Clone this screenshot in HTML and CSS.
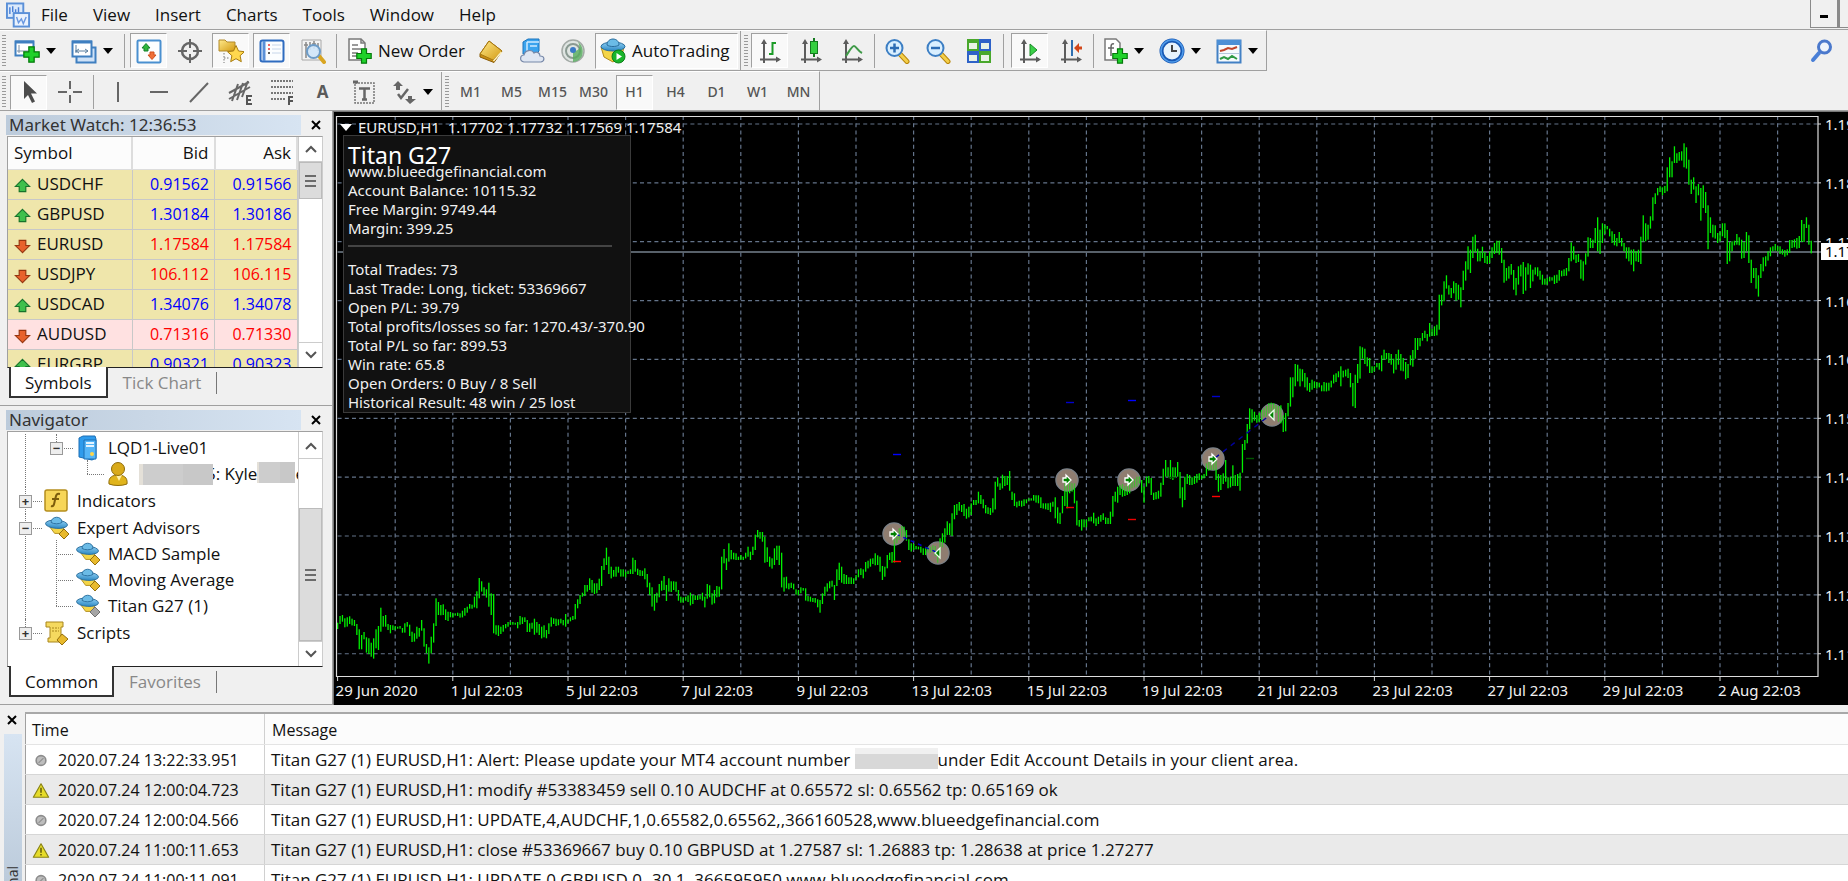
FILE: index.html
```html
<!DOCTYPE html>
<html lang="en">
<head>
<meta charset="utf-8">
<title>EURUSD,H1</title>
<link rel="stylesheet" href="styles.css">
</head>
<body>
<svg class="defs" aria-hidden="true">
  <defs>
    <linearGradient id="gGreen" x1="0" y1="0" x2="0" y2="1"><stop offset="0" stop-color="#7dff7d"/><stop offset="1" stop-color="#06a80c"/></linearGradient>
    <linearGradient id="gGold" x1="0" y1="0" x2="1" y2="1"><stop offset="0" stop-color="#ffe98a"/><stop offset="1" stop-color="#d39a12"/></linearGradient>
    <linearGradient id="gBlue" x1="0" y1="0" x2="0" y2="1"><stop offset="0" stop-color="#8fd0f5"/><stop offset="1" stop-color="#2b87c2"/></linearGradient>
    <symbol id="plus" viewBox="0 0 16 16"><path d="M5.500.8h5v4.700h4.700v5h-4.700v4.700h-5v-4.700H.8v-5h4.700z" fill="#1fd12a" stroke="#067a0c" stroke-width="1.200"/></symbol>
    <symbol id="up" viewBox="0 0 18 16"><path d="M9 1l7.500 7.500h-4V14h-7V8.500h-4z" fill="#3fc04c" stroke="#16732a" stroke-width="1.200"/></symbol>
    <symbol id="down" viewBox="0 0 18 16"><path d="M9 15L1.500 7.500h4V2h7v5.500h4z" fill="#e8622c" stroke="#96350f" stroke-width="1.200"/></symbol>
    <symbol id="ea" viewBox="0 0 26 24">
      <path d="M5 11l6 8h7l4-8z" fill="#f4d547" stroke="#b08b1c"/>
      <ellipse cx="13" cy="9" rx="12" ry="4.500" fill="url(#gBlue)" stroke="#2a6d9c" transform="rotate(4 13 9)"/>
      <path d="M7 7c0-7 12-8 12 0-3 2-9 2-12 0z" fill="#6bbbe6" stroke="#2a6d9c"/>
    </symbol>
    <symbol id="dot" viewBox="0 0 14 14"><circle cx="7" cy="7" r="4" fill="#bdbdbd" stroke="#8c8c8c" stroke-width="1.300"/><path d="M5 9l4-4" stroke="#909090"/></symbol>
    <symbol id="warn" viewBox="0 0 20 18"><path d="M10 1.500L18.500 16.500h-17z" fill="#e6dc2a" stroke="#8a8416" stroke-width="1.300" stroke-linejoin="round"/><path d="M10 6v5.500M10 13v1.500" stroke="#5b560c" stroke-width="1.600"/></symbol>
    <symbol id="axes" viewBox="0 0 26 26"><path d="M7 25V4M3 21.500h19" stroke="#5c5c5c" stroke-width="2" fill="none"/><path d="M7 1l3 5H4zM24 21.500l-5-3v6z" fill="#5c5c5c"/></symbol>
    <symbol id="lens" viewBox="0 0 26 26"><path d="M16 16l7 7.500" stroke="#b8860b" stroke-width="5" stroke-linecap="round"/><path d="M16 16l7 7.500" stroke="#f4cf4a" stroke-width="3" stroke-linecap="round"/><circle cx="10.500" cy="10" r="8" fill="#d9efff" stroke="#3d7fc4" stroke-width="2"/></symbol>
  </defs>
</svg>

<header class="top">
  <nav class="menubar">
    <svg class="applogo" viewBox="0 0 26 26"><rect x="1" y="1" width="17" height="15" fill="#dbe9fb" stroke="#5b90d8" stroke-width="2"/><path d="M4 5v7M7 4v6M10 7v6M13 5v7" fill="none" stroke="#4a80d8" stroke-width="1.500"/><rect x="8" y="11" width="16" height="14" fill="#eaf2fd" stroke="#5b90d8" stroke-width="2"/><path d="M11 15l2 6 3-4 2 5 3-7" fill="none" stroke="#6a98e0" stroke-width="1.500"/></svg>
    <button class="menu">File</button><button class="menu">View</button><button class="menu">Insert</button><button class="menu">Charts</button><button class="menu">Tools</button><button class="menu">Window</button><button class="menu">Help</button>
    <div class="winbtns"><button class="winbtn" aria-label="Minimize"><span class="minus"></span></button><button class="winbtn cut" aria-label="Restore"></button></div>
  </nav>
  <div class="toolrow">
    <div class="toolbar">
      <span class="grip"></span>
      <button class="drop" aria-label="New chart"><svg class="ico" viewBox="0 0 26 26"><rect x="1.500" y="3.500" width="18" height="14" fill="#fff" stroke="#3f7fc0" stroke-width="2"/><path d="M1 4h19" stroke="#3f7fc0" stroke-width="3"/><path d="M5 7v8M3 13h11" stroke="#7a8ea3"/><use href="#plus" x="9" y="8" width="17" height="17"/></svg><span class="caret"></span></button>
      <button class="drop" aria-label="Profiles"><svg class="ico" viewBox="0 0 26 26"><rect x="5.500" y="9.500" width="19" height="15" fill="#cfe2f7" stroke="#3f7fc0" stroke-width="2"/><rect x="1.500" y="3.500" width="19" height="15" fill="#fff" stroke="#3f7fc0" stroke-width="2"/><path d="M1 4h20" stroke="#3f7fc0" stroke-width="3"/><path d="M5 7v8M4 13h13M8 11l-3 2 3 2M14 11l3 2-3 2" stroke="#5b7f9f" fill="none"/></svg><span class="caret"></span></button>
      <span class="sep"></span>
      <button class="tb on" aria-label="Market Watch"><svg class="ico" viewBox="0 0 26 26"><rect x="1.500" y="2.500" width="23" height="22" rx="1" fill="#fdfefe" stroke="#4a90d0" stroke-width="2"/><path d="M10 5.500l4 4.500h-2v3H8v-3H6z" fill="#2fb63c" stroke="#14812a"/><path d="M16 21.500l-4-4.500h2v-3h4v3h2z" fill="#f07038" stroke="#d0501c"/></svg></button>
      <button class="tb" aria-label="Data Window"><svg class="ico" viewBox="0 0 26 26"><circle cx="13" cy="13" r="8" fill="none" stroke="#666" stroke-width="2.500"/><path d="M13 1v9M13 16v9M1 13h9M16 13h9" stroke="#666" stroke-width="2"/></svg></button>
      <button class="tb on" aria-label="Navigator"><svg class="ico" viewBox="0 0 26 26"><path d="M1 2h6l2 2h8v9H1z" fill="url(#gGold)" stroke="#b28a2a"/><path d="M6 15v10M6 20h6" stroke="#777" stroke-dasharray="1.500 1.500"/><path d="M18 7.500l2.500 5.500 6 .7-4.400 4 1.200 6-5.300-3-5.300 3 1.200-6-4.400-4 6-.7z" fill="#ffd84e" stroke="#a87c10"/></svg></button>
      <button class="tb on" aria-label="Terminal"><svg class="ico" viewBox="0 0 26 26"><rect x="1.500" y="2.500" width="23" height="21" rx="2" fill="#fbfdff" stroke="#2f6cc0" stroke-width="2"/><path d="M5 3v20" stroke="#5a90d8" stroke-width="3"/><path d="M9 7h2M9 11h2" stroke="#e33" stroke-width="1.500"/><path d="M9 15h2" stroke="#222" stroke-width="1.500"/><path d="M13 7h9M13 11h9M13 15h9" stroke="#c7d6ea"/></svg></button>
      <button class="tb" aria-label="Strategy Tester"><svg class="ico" viewBox="0 0 26 26"><path d="M2 2h19v20H2z" fill="#f3f3f3" stroke="#a8a8a8"/><path d="M6 4v16M10 4v8M14 3v8M18 5v8M4 7h4M12 6h4" stroke="#888" stroke-width="1.500"/><path d="M19 18l5 6" stroke="#d9a521" stroke-width="4" stroke-linecap="round"/><circle cx="13.500" cy="13.500" r="6.500" fill="#cfe6fa" fill-opacity=".9" stroke="#6d9cc8" stroke-width="2"/></svg></button>
      <span class="sep"></span>
      <button class="wide neworder"><svg class="ico" viewBox="0 0 26 26"><path d="M3 1h12l4 4v17H3z" fill="#fff" stroke="#7a7a7a" stroke-width="1.500"/><path d="M15 1v4h4M6 7h6M6 11h9M6 15h6M6 18h5" fill="none" stroke="#7a7a7a" stroke-width="1.500"/><use href="#plus" x="10" y="10" width="16" height="16"/></svg><span>New Order</span></button>
      <button class="tb" aria-label="MetaEditor"><svg class="ico" viewBox="0 0 26 26"><path d="M2 16L11 3l13 10-8 11.500L2 19z" fill="#c98e14" stroke="#8a5c08"/><path d="M2 16L11 3l13 10-9 9z" fill="url(#gGold)" stroke="#a8780f"/><path d="M15.500 23l8-9" stroke="#fff3c0" stroke-width="1.500"/></svg></button>
      <button class="tb" aria-label="Virtual hosting"><svg class="ico" viewBox="0 0 26 26"><path d="M4 4l5-3h11v12l-3 3H4z" fill="#3ba4ee" stroke="#1c74bd"/><path d="M8 4h12M8 4v11M11 8h7" stroke="#cfeaff" stroke-width="1.500"/><path d="M5 24c-5-1-4-7 0-7 1-5 8-6 10-2 3-2 6 0 6 3 5 0 5 5 1 6z" fill="#dfe6f2" stroke="#7788a8" stroke-width="1.200"/></svg></button>
      <button class="tb" aria-label="Signals"><svg class="ico" viewBox="0 0 26 26"><circle cx="13" cy="13" r="11" fill="#dfe5e2" stroke="#a3aaa6" stroke-width="1.500"/><circle cx="13" cy="13" r="7" fill="none" stroke="#8a9a92" stroke-width="2"/><path d="M13 13v11a11 11 0 0 0 9-6c2-6 0-11-4-14 3 6 1 9-5 9z" fill="#56ad5e" fill-opacity=".8"/><circle cx="13" cy="12" r="3" fill="#3a79c7"/></svg></button>
      <button class="wide on auto"><svg class="ico" viewBox="0 0 26 26"><path d="M1 9l3 10 9 5 9-7 2-8z" fill="#f4d547" stroke="#b08b1c"/><ellipse cx="13" cy="8.500" rx="12" ry="4.500" fill="url(#gBlue)" stroke="#2a6d9c"/><path d="M7 7c0-8 12-8 12 0-3 2-9 2-12 0z" fill="#6bbbe6" stroke="#2a6d9c"/><circle cx="18.500" cy="18.500" r="6.500" fill="#19b52a" stroke="#0c7d18"/><path d="M16.500 15l5.500 3.500-5.500 3.500z" fill="#fff"/></svg><span>AutoTrading</span></button>
      <span class="edge"></span><span class="grip"></span>
      <button class="tb on" aria-label="Bar chart"><svg class="ico" viewBox="0 0 26 26"><use href="#axes"/><path d="M15.500 17V4M15 5h4M12 16h4" stroke="#1c9c28" stroke-width="2"/></svg></button>
      <button class="tb" aria-label="Candlesticks"><svg class="ico" viewBox="0 0 26 26"><use href="#axes"/><path d="M16 0v19" stroke="#147a1e" stroke-width="2"/><rect x="12.500" y="3.500" width="7" height="12" fill="#35cf40" stroke="#147a1e"/></svg></button>
      <button class="tb" aria-label="Line chart"><svg class="ico" viewBox="0 0 26 26"><use href="#axes"/><path d="M7 18c4-6 6-10 8-10s4 5 8 7" fill="none" stroke="#3f9a48" stroke-width="2"/></svg></button>
      <span class="sep slim"></span>
      <button class="tb" aria-label="Zoom in"><svg class="ico" viewBox="0 0 26 26"><use href="#lens"/><path d="M6 10h9M10.500 5.500v9" stroke="#2c6cb4" stroke-width="2.500"/></svg></button>
      <button class="tb" aria-label="Zoom out"><svg class="ico" viewBox="0 0 26 26"><use href="#lens"/><path d="M6 10h9" stroke="#2c6cb4" stroke-width="2.500"/></svg></button>
      <button class="tb" aria-label="Tile windows"><svg class="ico" viewBox="0 0 26 26"><path d="M1 1h12v12H1zM13 13h12v12H13z" fill="#49a82c"/><path d="M13 1h12v12H13zM1 13h12v12H1z" fill="#2e62c8"/><path d="M3 5h8v6H3zM15 5h8v6h-8zM3 17h8v6H3zM15 17h8v6h-8z" fill="#e9f3e6"/></svg></button>
      <span class="sep roomy"></span>
      <button class="tb on" aria-label="Auto scroll"><svg class="ico" viewBox="0 0 26 26"><use href="#axes"/><path d="M13 6l7 6-7 6z" fill="#3ad048" stroke="#188a26"/></svg></button>
      <button class="tb" aria-label="Chart shift"><svg class="ico" viewBox="0 0 26 26"><use href="#axes"/><path d="M14 2v16" stroke="#2f6fb0" stroke-width="2"/><path d="M16 10l5-5v3.500h3v3h-3V15z" fill="#d2481c"/></svg></button>
      <span class="sep slim"></span>
      <button class="drop" aria-label="Indicators"><svg class="ico" viewBox="0 0 26 26"><path d="M3 1h11l4 4v17H3z" fill="#fff" stroke="#7a7a7a" stroke-width="1.500"/><path d="M12 6c-3-1-3 2-3 4v8M6 10h6" fill="none" stroke="#666" stroke-width="1.500"/><use href="#plus" x="10" y="10" width="16" height="16"/></svg><span class="caret"></span></button>
      <button class="drop" aria-label="Periods"><svg class="ico" viewBox="0 0 26 26"><circle cx="13" cy="13" r="10.500" fill="#e8f3fc" stroke="#1758b4" stroke-width="4"/><circle cx="13" cy="13" r="11" fill="none" stroke="#4f9bea" stroke-width="1.500"/><path d="M13 7v6h5" fill="none" stroke="#444" stroke-width="2"/></svg><span class="caret"></span></button>
      <button class="drop" aria-label="Templates"><svg class="ico" viewBox="0 0 26 26"><rect x="1.500" y="2.500" width="23" height="22" fill="#f6fafd" stroke="#4280c4" stroke-width="2"/><path d="M1 4.500h24" stroke="#4c8fd6" stroke-width="5"/><path d="M4 13l4-1 4-2 4 1 5-2" fill="none" stroke="#c0442a" stroke-width="2"/><path d="M3 15.500h20" stroke="#b5c9dd"/><path d="M4 21l4-2 4 2 4-3 5 3" fill="none" stroke="#2f9a44" stroke-width="2"/></svg><span class="caret"></span></button>
    </div>
    <button class="search" aria-label="Search"><svg class="ico" viewBox="0 0 26 26"><path d="M10 15l-6 7" stroke="#4a7fd6" stroke-width="4" stroke-linecap="round"/><circle cx="15.500" cy="9" r="6" fill="#eef3fb" stroke="#4a78cc" stroke-width="3"/></svg></button>
  </div>
  <div class="toolrow second">
    <div class="toolbar">
      <span class="grip"></span><span class="pad"></span>
      <button class="tb on" aria-label="Cursor"><svg class="ico" viewBox="0 0 26 26"><path d="M8 2v18l4-4 4 8 3-1.500-4-8h6z" fill="#4c4c4c"/></svg></button>
      <button class="tb" aria-label="Crosshair"><svg class="ico" viewBox="0 0 26 26"><path d="M13 2v8M13 16v8M1 13h9M16 13h9" stroke="#666" stroke-width="2"/></svg></button>
      <span class="sep"></span>
      <button class="tb" aria-label="Vertical line"><svg class="ico" viewBox="0 0 26 26"><path d="M13 3v20" stroke="#666" stroke-width="2"/></svg></button>
      <button class="tb" aria-label="Horizontal line"><svg class="ico" viewBox="0 0 26 26"><path d="M4 13h18" stroke="#666" stroke-width="2"/></svg></button>
      <button class="tb" aria-label="Trendline"><svg class="ico" viewBox="0 0 26 26"><path d="M3 23L21 4" stroke="#666" stroke-width="2"/></svg></button>
      <button class="tb" aria-label="Equidistant channel"><svg class="ico" viewBox="0 0 26 26"><path d="M1 14L21 3M1 20L22 8M4 22L10 5M9 21L15 4M14 18l6-16" stroke="#666" stroke-width="2"/><path d="M24 17h-5v8h5M19 21h4" fill="none" stroke="#555" stroke-width="2"/></svg></button>
      <button class="tb" aria-label="Fibonacci retracement"><svg class="ico" viewBox="0 0 26 26"><path d="M2 2h22M2 8h22M2 14h22M2 20h14" stroke="#777" stroke-width="2" stroke-dasharray="2 1"/><path d="M24 18h-4v8M20 22h4" fill="none" stroke="#555" stroke-width="2"/></svg></button>
      <button class="tb letter">A</button>
      <button class="tb" aria-label="Text label"><svg class="ico" viewBox="0 0 26 26"><rect x="4" y="4" width="19" height="20" fill="none" stroke="#777" stroke-width="1.500" stroke-dasharray="2 1"/><path d="M2 3h5" stroke="#666" stroke-width="3"/><path d="M8 9.500h11M13.500 9v12M11 20.500h5" stroke="#666" stroke-width="2.500"/></svg></button>
      <button class="drop" aria-label="Arrows"><svg class="ico" viewBox="0 0 26 26"><path d="M7 2l5 5h-3v4H5V7H2zM19 25l-5-5h3v-3h4v3h4z" fill="#666"/><path d="M7 15l3 4 7-9" fill="none" stroke="#666" stroke-width="2.500"/></svg><span class="caret"></span></button>
      <span class="edge"></span><span class="grip"></span>
      <button class="tb period">M1</button><button class="tb period">M5</button><button class="tb period">M15</button><button class="tb period">M30</button><button class="tb period on">H1</button><button class="tb period">H4</button><button class="tb period">D1</button><button class="tb period">W1</button><button class="tb period">MN</button>
    </div>
  </div>
</header>

<main class="work">
  <aside class="side">
    <section class="panel">
      <div class="titlebar"><h2>Market Watch: 12:36:53</h2><button class="close" aria-label="Close"><svg viewBox="0 0 12 12"><path d="M2 2l8 8M10 2l-8 8"/></svg></button></div>
      <div class="view market">
        <div class="clip">
          <table class="quotes">
            <thead><tr><th class="sym">Symbol</th><th>Bid</th><th>Ask</th></tr></thead>
            <tbody>
              <tr class="rise"><td class="sym"><span><svg><use href="#up"/></svg>USDCHF</span></td><td>0.91562</td><td>0.91566</td></tr>
              <tr class="rise"><td class="sym"><span><svg><use href="#up"/></svg>GBPUSD</span></td><td>1.30184</td><td>1.30186</td></tr>
              <tr class="fall"><td class="sym"><span><svg><use href="#down"/></svg>EURUSD</span></td><td>1.17584</td><td>1.17584</td></tr>
              <tr class="fall"><td class="sym"><span><svg><use href="#down"/></svg>USDJPY</span></td><td>106.112</td><td>106.115</td></tr>
              <tr class="rise"><td class="sym"><span><svg><use href="#up"/></svg>USDCAD</span></td><td>1.34076</td><td>1.34078</td></tr>
              <tr class="fall pink"><td class="sym"><span><svg><use href="#down"/></svg>AUDUSD</span></td><td>0.71316</td><td>0.71330</td></tr>
              <tr class="rise"><td class="sym"><span><svg><use href="#up"/></svg>EURGBP</span></td><td>0.90321</td><td>0.90323</td></tr>
            </tbody>
          </table>
        </div>
        <div class="scroll"><button class="sbtn" aria-label="Scroll up"><svg viewBox="0 0 14 10"><path d="M2 8l5-5 5 5"/></svg></button><div class="thumb short"><i></i><i></i><i></i></div><div class="track"></div><button class="sbtn" aria-label="Scroll down"><svg viewBox="0 0 14 10"><path d="M2 2l5 5 5-5"/></svg></button></div>
      </div>
      <div class="tabs"><button class="tab active">Symbols</button><button class="tab">Tick Chart</button></div>
    </section>

    <section class="panel">
      <div class="titlebar"><h2>Navigator</h2><button class="close" aria-label="Close"><svg viewBox="0 0 12 12"><path d="M2 2l8 8M10 2l-8 8"/></svg></button></div>
      <div class="view nav">
        <div class="clip">
          <ul class="tree">
            <li><span class="cell v"></span><span class="cell h up"><b class="box">−</b></span><svg class="ti" viewBox="0 0 24 24"><path d="M4 2l4-2h12l1 3v19l-4 2-13-3z" fill="#2f9bec" stroke="#1c6fb5"/><path d="M9 4h12v19H9z" fill="#55b5f7" stroke="#1c6fb5"/><path d="M11 7h8M11 10h8" stroke="#e5f4ff" stroke-width="2"/><circle cx="17" cy="18" r="2" fill="#ffd54a"/></svg>LQD1-Live01</li>
            <li><span class="cell v"></span><span class="cell"></span><span class="cell h up"></span><svg class="ti" viewBox="0 0 24 24"><path d="M3 22c-1-7 4-9 9-9s10 2 9 9c-5 2-13 2-18 0z" fill="#e0b41c" stroke="#8f6c0a"/><path d="M10 13l3 6 3-6z" fill="#fff0a8"/><circle cx="12" cy="7" r="6.500" fill="#d9aa1a" stroke="#8f6c0a"/></svg><span class="mosaic long"></span><span>5: Kyle</span><span class="mosaic mid"></span><span>e</span></li>
            <li class="lead"><span class="cell v h"><b class="box">+</b></span><svg class="ti" viewBox="0 0 24 24"><rect x="1" y="1" width="22" height="21" rx="2" fill="#f7d659" stroke="#b58e1e" stroke-width="1.500"/><path d="M16 5c-4-1-4 2-5 6s-1 7-4 6M8 10h7" fill="none" stroke="#7d5d0c" stroke-width="2"/></svg>Indicators</li>
            <li class="lead"><span class="cell v h"><b class="box">−</b></span><svg class="ti ea" viewBox="0 0 26 24"><use href="#ea" width="25" height="22"/><path d="M20 13l5 5-5 5-5-5z" fill="#e8b92c" stroke="#95700f"/></svg>Expert Advisors</li>
            <li><span class="cell v"></span><span class="cell v h"></span><svg class="ti ea" viewBox="0 0 26 24"><use href="#ea" width="25" height="22"/><path d="M20 13l5 5-5 5-5-5z" fill="#e8b92c" stroke="#95700f"/></svg>MACD Sample</li>
            <li><span class="cell v"></span><span class="cell v h"></span><svg class="ti ea" viewBox="0 0 26 24"><use href="#ea" width="25" height="22"/><path d="M20 13l5 5-5 5-5-5z" fill="#e8b92c" stroke="#95700f"/></svg>Moving Average</li>
            <li><span class="cell v"></span><span class="cell h up"></span><svg class="ti ea" viewBox="0 0 26 24"><use href="#ea" width="25" height="22"/><path d="M20 13l5 5-5 5-5-5z" fill="#a5a5a5" stroke="#707070"/></svg>Titan G27 (1)</li>
            <li class="lead"><span class="cell h up"><b class="box">+</b></span><svg class="ti" viewBox="0 0 24 24"><path d="M2 1h17v5h-2v12h3v3H4v-4h2V6H2z" fill="#f5d95f" stroke="#a8851d"/><path d="M8 7h7M8 10h7" stroke="#a8851d" stroke-dasharray="2 1"/><path d="M18 13l6 5-6 6-5-5z" fill="#e8b92c" stroke="#95700f"/></svg>Scripts</li>
          </ul>
        </div>
        <div class="scroll lower"><button class="sbtn" aria-label="Scroll up"><svg viewBox="0 0 14 10"><path d="M2 8l5-5 5 5"/></svg></button><div class="track"></div><div class="thumb tall"><i></i><i></i><i></i></div><button class="sbtn" aria-label="Scroll down"><svg viewBox="0 0 14 10"><path d="M2 2l5 5 5-5"/></svg></button></div>
      </div>
      <div class="tabs"><button class="tab active">Common</button><button class="tab">Favorites</button></div>
    </section>
  </aside>

  <section class="chart">
    <svg id="plot" class="plot" role="img" aria-label="EURUSD hourly bar chart"></svg>
    <div class="ohlc"><span class="tri"></span>EURUSD,H1  1.17702 1.17732 1.17569 1.17584</div>
    <div class="info">
      <h1>Titan G27</h1>
      <p>www.blueedgefinancial.com</p>
      <p>Account Balance: 10115.32</p>
      <p>Free Margin: 9749.44</p>
      <p>Margin: 399.25</p>
      <hr>
      <p>Total Trades: 73</p>
      <p>Last Trade: Long, ticket: 53369667</p>
      <p>Open P/L: 39.79</p>
      <p>Total profits/losses so far: 1270.43/-370.90</p>
      <p>Total P/L so far: 899.53</p>
      <p>Win rate: 65.8</p>
      <p>Open Orders: 0 Buy / 8 Sell</p>
      <p>Historical Result: 48 win / 25 lost</p>
    </div>
  </section>
</main>

<section class="terminal">
  <div class="strip"><button class="close" aria-label="Close"><svg viewBox="0 0 12 12"><path d="M2 2l8 8M10 2l-8 8"/></svg></button><div class="vbar"><span>Terminal</span></div></div>
  <table class="log">
    <thead><tr><th class="time">Time</th><th>Message</th></tr></thead>
    <tbody>
      <tr><td class="time"><span><svg><use href="#dot"/></svg>2020.07.24 13:22:33.951</span></td><td>Titan G27 (1) EURUSD,H1: Alert: Please update your MT4 account number <span class="mosaic wide-m"></span>under Edit Account Details in your client area.</td></tr>
      <tr><td class="time"><span><svg><use href="#warn"/></svg>2020.07.24 12:00:04.723</span></td><td>Titan G27 (1) EURUSD,H1: modify #53383459 sell 0.10 AUDCHF at 0.65572 sl: 0.65562 tp: 0.65169 ok</td></tr>
      <tr><td class="time"><span><svg><use href="#dot"/></svg>2020.07.24 12:00:04.566</span></td><td>Titan G27 (1) EURUSD,H1: UPDATE,4,AUDCHF,1,0.65582,0.65562,,366160528,www.blueedgefinancial.com</td></tr>
      <tr><td class="time"><span><svg><use href="#warn"/></svg>2020.07.24 11:00:11.653</span></td><td>Titan G27 (1) EURUSD,H1: close #53369667 buy 0.10 GBPUSD at 1.27587 sl: 1.26883 tp: 1.28638 at price 1.27277</td></tr>
      <tr><td class="time"><span><svg><use href="#dot"/></svg>2020.07.24 11:00:11.091</span></td><td>Titan G27 (1) EURUSD,H1: UPDATE,0,GBPUSD,0,-30.1,,366595950,www.blueedgefinancial.com</td></tr>
    </tbody>
  </table>
</section>
<script src="chart.js"></script>
</body>
</html>
```

FILE: styles.css
```css
* { box-sizing: border-box; }
body { margin: 0; height: 100vh; overflow: hidden; display: flex; flex-direction: column; background: #f0f0f0; color: #111; font: 17px/22px "Open Sans", "Noto Sans", sans-serif; }
button { font: inherit; color: inherit; background: none; border: 0; padding: 0; margin: 0; }
.defs { position: absolute; width: 0; height: 0; }
.top { flex: none; }

.menubar { display: flex; align-items: center; height: 30px; padding-left: 6px; border-bottom: 1px solid #a0a0a0; }
.applogo { width: 25px; height: 26px; margin-right: 10px; }
.menu { margin-right: 25px; }
.winbtns { margin-left: auto; display: flex; align-self: stretch; }
.winbtn { width: 29px; height: 28px; border: 1px solid #8a8a8a; border-top: 0; border-right-width: 2px; display: flex; align-items: center; justify-content: center; }
.winbtn.cut { width: 9px; border-right: 0; }
.minus { width: 8px; height: 3px; margin-top: 6px; background: #000; }

.toolrow { display: flex; justify-content: space-between; height: 41px; }
.toolbar { display: flex; align-items: center; padding-left: 2px; border-top: 1px solid #fff; border-right: 1px solid #a0a0a0; border-bottom: 1px solid #a0a0a0; }
.second { height: 40px; border-bottom: 1px solid #a0a0a0; }
.second .toolbar { border-bottom: 0; padding-top: 2px; }
.grip { width: 5px; height: 32px; flex: none; background: repeating-linear-gradient(#9a9a9a 0 1px, #f0f0f0 1px 3px); border-right: 1px solid #f0f0f0; }
.pad { width: 1px; }
.ico { width: 26px; height: 26px; flex: none; display: block; }
.tb { width: 37px; height: 35px; margin: 0 2px; flex: none; display: flex; align-items: center; justify-content: center; }
.on { background: #f9f9f9; border: 1px solid #fff; border-top-color: #a0a0a0; border-left-color: #a0a0a0; }
.drop { display: flex; align-items: center; width: 57px; padding-left: 7px; flex: none; }
.caret { margin-left: 6px; border: 5px solid transparent; border-top: 6px solid #000; border-bottom: 0; }
.sep { width: 1px; height: 34px; margin: 0 3px; background: #a0a0a0; }
.sep.slim { margin: 0 1px 0 2px; }
.sep.roomy { margin: 0 5px 0 4px; }
.edge { width: 1px; height: 40px; margin: 0 3px 0 0; background: #a0a0a0; }
.wide { display: flex; align-items: center; gap: 6px; height: 36px; flex: none; white-space: nowrap; }
.neworder { width: 130px; padding-left: 6px; }
.auto { width: 143px; margin: 0 2px; padding-left: 4px; }
.letter { font-weight: 700; color: #5a5a5a; }
.period { font: 14px/18px "Noto Sans", "Open Sans", sans-serif; font-weight: 500; color: #555; }
.search { width: 52px; display: flex; align-items: center; justify-content: center; }

.work { display: flex; flex: none; }
.side { width: 333px; flex: none; border-right: 1px solid #a0a0a0; }
.panel { padding: 4px 9px 7px 6px; border-bottom: 1px solid #a0a0a0; }
.titlebar { display: flex; height: 20px; margin-bottom: 1px; }
.titlebar h2 { flex: 1; margin: 0; padding-left: 3px; font: 17px/20px "Noto Sans", "Open Sans", sans-serif; color: #333; background: linear-gradient(90deg, #bccbdb, #d7e4f2); }
.close { width: 22px; display: flex; align-items: center; justify-content: flex-end; }
.close svg { width: 12px; height: 12px; margin-right: 1px; }
.close path { stroke: #000; stroke-width: 2; }
.view { display: flex; margin-left: 1px; background: #fff; border: 1px solid #a0a0a0; border-bottom: 1px solid #222; border-right-color: #ccc; }
.clip { flex: 1; overflow: hidden; min-width: 0; }
.market { height: 232px; }
.nav { height: 236px; }
.quotes { width: 100%; border-collapse: collapse; table-layout: fixed; }
.quotes th { height: 32px; font-weight: 400; text-align: right; background: #fcfcfc; border-right: 2px solid #ddd; border-bottom: 1px solid #ddd; padding: 0 5px 0 0; }
.quotes .sym { width: 124px; text-align: left; padding-left: 6px; }
.quotes td { height: 30px; padding: 0 5px 0 0; font-size: 16px; text-align: right; background: #efe6ab; border-right: 1px solid #c8c8c8; border-bottom: 1px solid #c8c8c8; }
.quotes .sym span { display: flex; align-items: center; gap: 6px; font-size: 17px; }
.quotes .sym svg { width: 17px; height: 16px; margin-top: 3px; }
.quotes .rise td { color: #00f; }
.quotes .fall td { color: #f00; }
.quotes tr .sym { color: #111; }
.quotes .pink td { background: #ffe1e1; }
.scroll { width: 24px; flex: none; display: flex; flex-direction: column; border-left: 1px solid #ccc; background: #fff; }
.scroll.lower { padding-top: 2px; }
.sbtn { height: 25px; flex: none; display: flex; align-items: center; justify-content: center; border-bottom: 1px solid #ccc; }
.sbtn:last-child { border-top: 1px solid #ccc; border-bottom: 0; }
.sbtn svg { width: 14px; height: 10px; fill: none; stroke: #555; stroke-width: 2; }
.track { flex: 1; }
.thumb { flex: none; background: #dcdcdc; border: 1px solid #bbb; display: flex; flex-direction: column; align-items: center; justify-content: center; gap: 3px; }
.thumb i { width: 11px; height: 2px; background: #6b6b6b; }
.thumb.short { height: 37px; }
.thumb.tall { height: 133px; }
.tabs { display: flex; padding-left: 3px; }
.tab { height: 30px; padding: 0 15px; color: #888; position: relative; }
.tab.active { background: #fff; color: #111; border: 2px solid #333; border-top: 0; margin-top: -1px; height: 31px; padding: 2px 14px 0; z-index: 1; }
.tab:not(.active) { border-right: 1px solid #777; height: 22px; margin-top: 4px; line-height: 20px; }

.tree { list-style: none; margin: 0; padding: 3px 0 0 2px; }
.tree li { display: flex; align-items: center; height: 26px; white-space: nowrap; }
.tree .lead { margin-top: 1px; }
.cell { position: relative; width: 31px; align-self: stretch; flex: none; display: flex; align-items: center; padding-left: 9px; }
.cell.v::before { content: ""; position: absolute; left: 15px; top: -1px; bottom: 0; border-left: 1px dotted #777; }
.cell.h::after { content: ""; position: absolute; left: 15px; right: -1px; top: 13px; border-top: 1px dotted #777; }
.cell.up::before { content: ""; position: absolute; left: 15px; top: -1px; height: 14px; border-left: 1px dotted #777; }
.box { position: relative; z-index: 1; width: 13px; height: 13px; border: 1px solid #999; background: #eee; font: 700 13px/11px "Noto Sans", sans-serif; text-align: center; color: #333; }
.ti { width: 24px; height: 24px; margin: 0 9px 0 3px; flex: none; overflow: visible; }
.ti.ea { width: 26px; margin-right: 7px; }
.mosaic { display: inline-block; height: 21px; background: linear-gradient(90deg, #e4e0d8 0 6%, #cdcdcd 6% 60%, #c8c8c8 60%); vertical-align: middle; position: relative; }
.mosaic.long { width: 74px; margin-right: -7px; flex: none; }
.mosaic.mid { width: 38px; flex: none; margin-bottom: 4px; }
.mosaic.wide-m { width: 83px; height: 21px; margin: -6px 0 0; background: linear-gradient(#f0f0f0 0 30%, #d8d8d8 30%); }

.chart { flex: 1; min-width: 0; position: relative; overflow: hidden; background: #000; border-top: 1px solid #777; border-left: 1px solid #777; color: #f0f0f0; font: 15px/19px "Noto Sans", "Open Sans", sans-serif; }
.plot { position: absolute; left: 0; top: 0; width: 100%; height: 100%; }
.plot text { fill: #f0f0f0; font-size: 15px; }
.ohlc { position: relative; display: flex; align-items: center; gap: 6px; margin: 6px 0 0 6px; white-space: pre; height: 19px; }
.tri { border: 6px solid transparent; border-top: 7px solid #fff; border-bottom: 0; }
.info { position: relative; width: 288px; margin: -2px 0 0 9px; padding: 11px 5px 0 4px; height: 278px; background: #111; border: 1px solid #3a3a3a; white-space: nowrap; }
.info h1 { margin: 0 0 -1px; font-size: 23px; line-height: 16px; font-weight: 400; color: #fff; }
.info p { margin: 0; }
.info hr { width: 264px; height: 2px; margin: 7px 0 13px; border: 0; background: #444; }

.terminal { flex: 1; min-height: 0; overflow: hidden; display: flex; margin-top: 7px; }
.strip { width: 25px; flex: none; display: flex; flex-direction: column; padding-left: 4px; }
.strip .close { width: 17px; height: 16px; flex: none; justify-content: center; }
.vbar { flex: 1; margin-top: 6px; width: 18px; background: linear-gradient(#d7e4f2, #bccbdb); overflow: hidden; padding-top: 132px; }
.vbar span { writing-mode: vertical-rl; transform: rotate(180deg); display: block; font-size: 14px; line-height: 18px; color: #333; }
.log { flex: 1; align-self: flex-start; border-collapse: collapse; table-layout: fixed; background: #fff; border-top: 2px solid #a8a8a8; border-left: 1px solid #a0a0a0; white-space: nowrap; }
.log th { height: 31px; text-align: left; font-weight: 400; font-size: 16px; background: #fcfcfc; border-bottom: 1px solid #e4e4e4; padding: 3px 0 0 7px; }
.log td { height: 30px; padding: 2px 0 0 6px; border-bottom: 1px solid #d6d6d6; line-height: 20px; }
.log tr:nth-child(even) td { background: #eaeaea; }
.log .time { width: 239px; padding-left: 6px; border-right: 1px solid #d0d0d0; font-size: 16px; }
.log .time span { display: flex; align-items: center; gap: 8px; }
.log .time svg { width: 18px; height: 17px; }
```

FILE: chart.js
```js
// Each entry of `days` covers one grid column; values are high/low pairs in thirds of a pixel below `top`.
const CELL = 57.6, LEFT = 3.6, RIGHT = 1484, BOTTOM = 564, GRID_TOP = 12, GRID_STEP = 58.86;
const sections = [
  { top: 388, days: [
    "368 387 348 372 345 365 355 382 352 380 349 372 356 376 360 378 372 405 388 448 405 448 396 418 412 458 415 462 428 470 415 476 388 445 378 450 323 395 348 380 345 380 372 390 375 400 376 390",
    "378 390 380 386 378 386 384 398 370 398 366 380 374 408 395 426 400 425 380 416 384 410 360 392 385 440 432 460 442 491 410 460 370 428 295 378 306 345 315 346 313 345 328 360 335 363 336 352",
    "340 353 340 347 338 348 340 353 332 352 324 347 320 338 312 326 314 326 290 322 274 325 234 295 244 275 262 286 268 293 248 320 280 345 282 400 376 404 376 408 380 402 375 395 372 385 366 380",
    "366 375 366 374 368 374 366 385 348 374 352 372 352 366 360 396 370 396 368 386 356 404 366 398 372 405 380 415 376 412 390 415 370 402 352 380 355 372 356 378 358 376 356 370 360 376 342 380",
    "358 370 352 364 348 360 312 358 298 325 285 312 278 290 255 288 255 275 235 270 240 278 250 282 250 280 236 270 198 258 175 210 143 195 170 222 200 235 210 230 200 230 200 218 208 230 208 230",
    "215 232 212 222 208 222 173 222 180 215 206 225 210 228 212 228 205 238 222 262 248 285 262 320 282 332 278 308 252 292 242 272 228 270 255 303 235 275 244 276 244 270 245 275 270 302 290 308",
    "292 308 290 302 286 306 278 316 285 312 286 300 286 300 286 298 278 302 290 322 252 296 256 292 280 314 270 310 258 292 260 290 170 268 147 190 175 210 130 185 150 178 158 178 160 180 170 180",
    "165 180 170 180 158 175 140 170 155 180 140 165 104 150 90 112 96 116 96 125 110 188 142 186 170 200 175 206 145 195 137 180 137 195 158 262 232 275 230 265 250 268 248 264 251 268 268 284",
    "270 286 262 280 264 272 265 302 288 304 290 305 294 306 294 308 298 322 300 338 280 312 260 288 250 275 244 265 242 260 255 300 208 258 188 240 200 248 222 252 225 252 232 252 232 252 235 252" ] },
  { top: 268, days: [
    "585 600 568 592 565 585 568 595 546 575 542 565 536 560 535 552 520 556 526 555 530 575 558 600 560 590 525 565 518 540 516 548 475 548 455 490 445 480 438 470 440 470 450 482 478 510 490 515",
    "492 510 498 508 500 508 500 518 505 525 505 525 502 518 500 518 496 516 498 528 512 548 475 518 460 502 445 488 424 465 430 465 400 468 375 418 372 405 366 392 375 396 372 408 386 416 380 412",
    "370 405 360 375 360 375 335 370 345 372 358 385 375 400 382 402 384 405 355 398 305 388 292 320 310 330 284 325 288 318 288 315 273 332 335 360 340 378 365 382 362 378 362 380 358 378 358 370",
    "355 362 355 362 345 362 346 368 346 370 352 384 370 386 370 388 370 390 368 396 365 380 352 415 382 430 398 432 348 400 310 378 312 385 300 340 310 335 310 370 362 436 420 440 418 452 418 442",
    "420 442 412 424 410 424 398 430 415 438 410 432 405 425 400 420 412 432 414 432 395 432 348 410 335 365 320 368 315 345 312 350 318 348 312 345 305 340 300 325 296 322 290 320 290 310 300 338",
    "320 368 290 320 288 310 294 345 338 360 336 358 332 356 308 350 266 315 240 290 262 290 240 296 262 300 262 292 246 290 276 355 322 382 290 360 282 312 285 315 292 315 288 312 282 308 280 300",
    "286 298 282 295 250 288 245 272 240 270 240 270 240 300 282 335 285 330 280 312 240 305 292 325 290 322 256 318 285 318 282 318 278 332 192 278 180 210 132 190 85 148 88 128 95 122 105 128" ] },
  { top: -4, days: [
    "914 941 906 936 901 926 894 926 886 916 884 916 886 911 891 914 894 941 892 946 922 972 915 970 885 925 808 896 808 868 768 835 770 820 782 835 784 820 795 838 808 848 825 852 815 845 820 840",
    "822 842 824 838 832 850 822 850 824 850 824 848 818 838 800 826 796 822 790 808 775 835 788 808 785 805 782 810 795 838 825 895 800 900 768 825 715 812 718 752 722 768 748 775 750 795 775 795",
    "775 790 765 778 765 785 742 790 725 756 735 754 735 765 738 770 752 796 738 785 725 770 738 788 750 790 762 814 768 810 742 772 726 776 690 752 690 726 690 715 675 698 668 690 678 700 645 686",
    "662 684 655 684 650 682 560 665 560 592 520 580 502 542 532 560 540 570 520 556 525 578 530 575 538 598 488 546 460 518 415 485 425 495 386 450 380 432 422 460 430 460 416 450 432 465 444 468",
    "430 465 418 450 405 438 398 435 398 440 420 465 455 524 480 518 475 512 468 500 486 545 510 562 475 530 470 505 462 558 478 548 466 500 470 540 485 520 478 500 478 505 488 515 500 530 512 530",
    "510 530 506 520 508 518 502 528 500 525 486 518 488 505 484 504 480 503 450 490 403 460 415 455 440 465 438 462 455 512 460 518 436 470 388 446 390 420 395 420 360 405 328 430 365 438 346 405",
    "350 378 354 364 362 385 370 405 378 412 390 415 372 405 390 415 405 430 418 452 418 460 425 470 424 490 430 460 425 462 386 468 322 400 346 400 350 395 325 362 268 338 256 288 240 262 235 252",
    "238 262 234 255 178 250 148 208 160 208 115 165 136 165 132 158 130 158 106 178 118 182 155 230 215 258 208 245 235 285 228 262 240 338 232 300 252 315 292 424 328 375 350 388 352 392 375 405",
    "370 400 346 385 346 390 366 468 402 460 400 430 398 412 378 410 388 412 395 452 402 450 372 430 382 465 455 525 480 510 480 542 502 566 468 510 448 490 445 475 430 458 418 445 415 430 408 428",
    "415 430 415 438 424 440 426 446 424 442 396 435 396 420 394 418 390 422 384 420 336 402 348 402 328 360 350 410 398 436" ] }
];
const marks = { open: [[560, 422], [733, 368], [795, 368], [879, 347]], close: [[604, 441], [938, 303]] };
const levels = [
  [559, 343, "#00f"], [732, 291, "#00c"], [794, 289, "#00f"], [878, 285, "#00c"],
  [559, 450, "#f00"], [732, 396, "#e00"], [794, 408, "#e00"], [878, 385, "#f00"],
  [912, 347, "#050"], [834, 366, "#050"]
];
const dates = ["29 Jun 2020", "1 Jul 22:03", "5 Jul 22:03", "7 Jul 22:03", "9 Jul 22:03", "13 Jul 22:03", "15 Jul 22:03", "19 Jul 22:03", "21 Jul 22:03", "23 Jul 22:03", "27 Jul 22:03", "29 Jul 22:03", "2 Aug 22:03"];
const prices = ["1.19200", "1.18445", "1.17690", "1.16935", "1.16180", "1.15425", "1.14670", "1.13915", "1.12960", "1.11905"];

let out = "";
const line = (x1, y1, x2, y2, attrs) => { out += `<line x1="${x1}" y1="${y1}" x2="${x2}" y2="${y2}" ${attrs}/>`; };
const text = (x, y, s, attrs = "") => { out += `<text x="${x}" y="${y}" ${attrs}>${s}</text>`; };
const circles = (attrs) => {
  for (const [x, y] of marks.open.concat(marks.close)) out += `<circle cx="${x}" cy="${y}" r="11" ${attrs}/>`;
};

const dash = 'stroke="#64748a" stroke-width="1.2" stroke-dasharray="4 3.2"';
for (let k = 1; k <= 25; k++) line(LEFT + k * CELL, 4, LEFT + k * CELL, BOTTOM, dash);
for (let k = 0; k < 10; k++) {
  const y = GRID_TOP + k * GRID_STEP;
  line(LEFT, y, RIGHT, y, dash);
  line(RIGHT, y, RIGHT + 3, y, 'stroke="#ddd"');
  text(RIGHT + 7, y + 6, prices[k]);
}
line(LEFT, 140, RIGHT + 3, 140, 'stroke="#76828e" stroke-width="1.4"');

circles('fill="#8f7d70" stroke="#78828c" stroke-width="1.5"');

let col = 0;
for (const { top, days } of sections) {
  for (const day of days) {
    const v = day.split(" ").map(Number), n = v.length / 2, step = n < 20 ? 2.4 : CELL / n;
    for (let i = 0; i < n; i++) {
      const x = LEFT + col * CELL + i * step - 0.6;
      out += `<rect x="${x.toFixed(2)}" y="${(top + v[2 * i] / 3).toFixed(1)}" width="1.3" height="${((v[2 * i + 1] - v[2 * i]) / 3).toFixed(1)}" fill="#00f000"/>`;
    }
    col++;
  }
}
circles('fill="#8f7d70" fill-opacity="0.5"');

line(562, 422, 602, 440, 'stroke="#0000c8" stroke-width="1.4" stroke-dasharray="4 4"');
line(881, 346, 936, 303, 'stroke="#0000a0" stroke-width="1.4" stroke-dasharray="5 5"');
for (const [x, y, c] of levels) line(x, y - 0.5, x + 8, y - 0.5, `stroke="${c}" stroke-width="1.4"`);
for (const [x, y] of marks.open) out += `<path d="M${x - 4} ${y - 2}h3v-3l5 5-5 5v-3h-3z" fill="#008000" stroke="#fff" stroke-width="1.3"/>`;
for (const [x, y] of marks.close) out += `<path d="M${x + 2} ${y - 5}v10l-5-5z" fill="#008000" stroke="#e8ffe8" stroke-width="1.3"/>`;

out += `<path d="M2.500 ${BOTTOM + 0.5}V4.500H${RIGHT}V${BOTTOM + 0.5}z" fill="none" stroke="#ddd" stroke-width="1.2"/>`;
dates.forEach((d, i) => {
  const x = LEFT + i * 2 * CELL;
  line(x, BOTTOM, x, BOTTOM + 5, 'stroke="#ddd"');
  text(x - 2, BOTTOM + 20, d);
});
out += `<rect x="${RIGHT + 3}" y="131" width="40" height="17" fill="#fff"/>`;
text(RIGHT + 7, 145, "1.17584", 'style="fill:#000"');
document.getElementById("plot").innerHTML = out;
```
